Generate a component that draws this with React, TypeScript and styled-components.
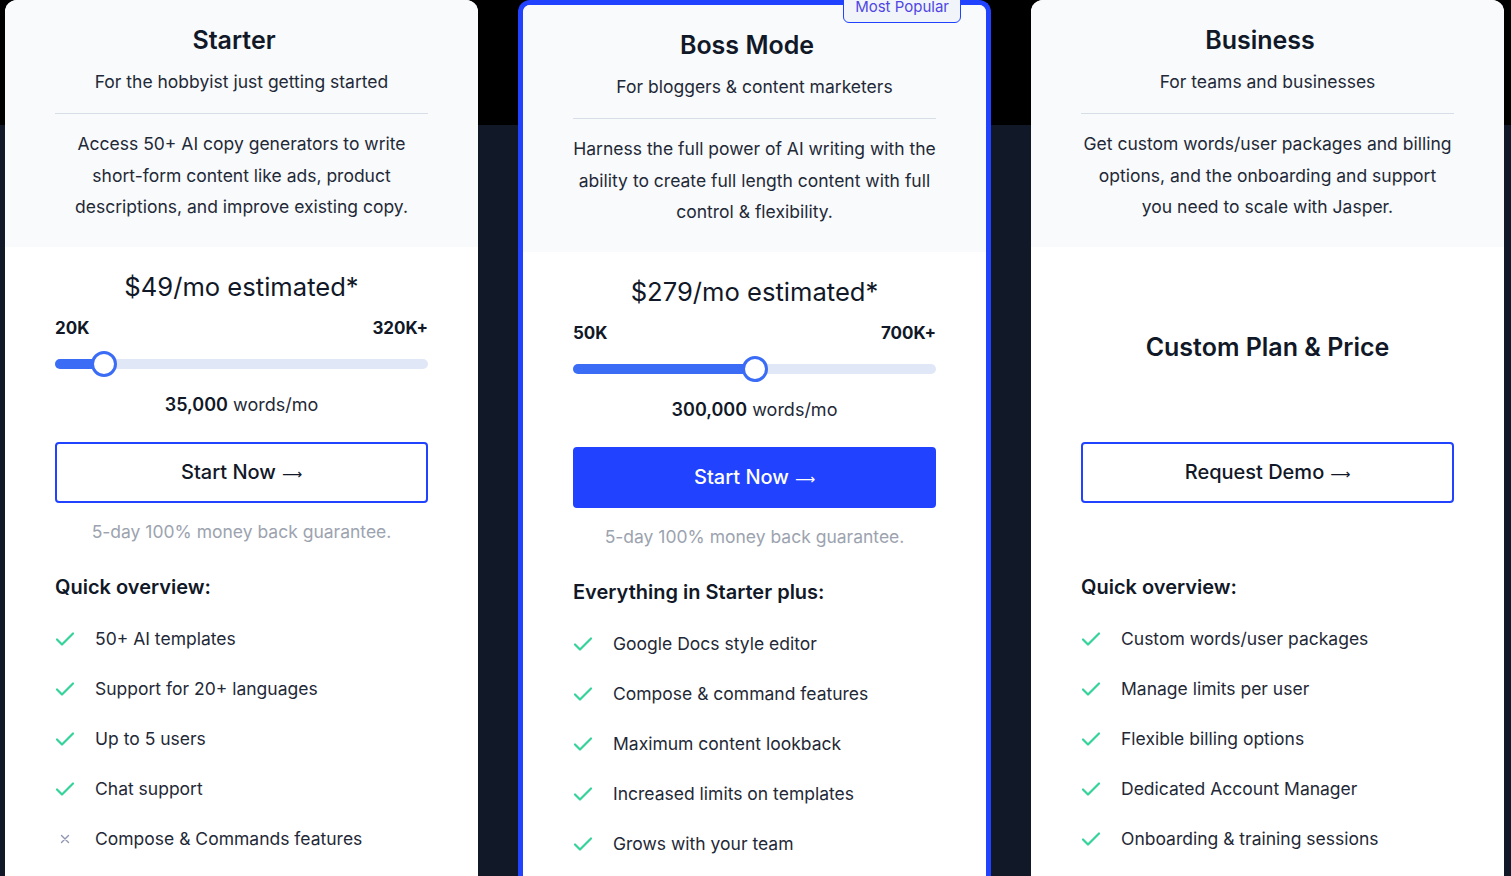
import React from "react";
import styled, { createGlobalStyle } from "styled-components";

const GlobalStyle = createGlobalStyle`
  * { box-sizing: border-box; }
  html, body { margin: 0; padding: 0; }
  body {
    font-family: Inter, "Noto Sans", "Liberation Sans", sans-serif;
    color: #111827;
    background: #111827;
  }
`;

const Page = styled.div`
  min-height: 876px;
  background: linear-gradient(to bottom, #000 0, #000 125px, #111827 125px, #111827 100%);
  padding: 0 7px 0 5px;
`;

const Grid = styled.div`
  display: grid;
  grid-template-columns: repeat(3, minmax(0, 1fr));
  gap: 40px;
  align-items: start;
`;

const Card = styled.div<{ $featured?: boolean }>`
  position: relative;
  background: #fff;
  border-radius: 12px 12px 0 0;
  border: ${(p) => (p.$featured ? "5px solid #2142ff" : "none")};
  border-bottom: none;
  padding-bottom: 60px;
`;

const Top = styled.div<{ $featured?: boolean }>`
  display: flex;
  flex-direction: column;
  align-items: center;
  background: #f8fafc;
  border-radius: ${(p) => (p.$featured ? "7px 7px 0 0" : "12px 12px 0 0")};
  padding: 24px 50px 24px;
  text-align: center;
`;

const Title = styled.h2`
  margin: 0;
  padding-right: 15px;
  font-size: 25px;
  line-height: 32px;
  font-weight: 600;
  color: #111827;
`;

const Subtitle = styled.p`
  margin: 12px 0 0;
  font-size: 17.5px;
  line-height: 28px;
  color: #1f2937;
`;

const Divider = styled.hr`
  align-self: stretch;
  border: none;
  height: 1px;
  background: #d8dee8;
  margin: 17px 0 14px;
`;

const Desc = styled.p`
  width: 369px;
  flex: none;
  margin: 0;
  font-size: 17.5px;
  line-height: 31.5px;
  color: #1f2937;
`;

const Body = styled.div`
  padding: 0 50px;
`;

const PriceBlock = styled.div`
  height: 172px;
  padding-top: 22px;
`;

const Price = styled.div`
  text-align: center;
  font-size: 25.6px;
  line-height: 36px;
  color: #111827;
`;

const RangeLabels = styled.div`
  margin-top: 11px;
  display: flex;
  justify-content: space-between;
  font-size: 17px;
  line-height: 24px;
  font-weight: 700;
  color: #111827;
`;

const Slider = styled.div`
  position: relative;
  margin-top: 11px;
  height: 26px;
  display: flex;
  align-items: center;
`;

const Track = styled.div`
  position: relative;
  width: 100%;
  height: 10px;
  border-radius: 5px;
  background: #e0e8f8;
`;

const Fill = styled.div`
  position: absolute;
  left: 0;
  top: 0;
  bottom: 0;
  border-radius: 5px;
  background: #3b6cf6;
`;

const Thumb = styled.div`
  position: absolute;
  top: 50%;
  width: 26px;
  height: 26px;
  margin: -13px 0 0 -13px;
  border-radius: 50%;
  background: #fff;
  border: 3px solid #3b6cf6;
`;

const Words = styled.div`
  margin-top: 14px;
  text-align: center;
  font-size: 18px;
  line-height: 28px;
  color: #1f2937;
  b { font-weight: 600; color: #111827; }
`;

const CustomPlan = styled.div`
  height: 172px;
  padding-top: 82px;
  text-align: center;
  font-size: 25px;
  line-height: 36px;
  font-weight: 600;
  color: #111827;
`;

const Button = styled.button<{ $filled?: boolean }>`
  display: flex;
  align-items: center;
  justify-content: center;
  gap: 6px;
  width: 100%;
  height: 61px;
  margin-top: 23px;
  border-radius: 4px;
  border: 2px solid #2142ff;
  background: ${(p) => (p.$filled ? "#2142ff" : "#fff")};
  color: ${(p) => (p.$filled ? "#fff" : "#111827")};
  font-family: inherit;
  font-size: 20px;
  font-weight: 500;
  cursor: pointer;
`;

const Arrow = styled.span`
  font-family: "DejaVu Sans", sans-serif;
  font-weight: 400;
  font-size: 14px;
  line-height: 1;
  position: relative;
  top: 2px;
`;

const Guarantee = styled.div<{ $hidden?: boolean }>`
  margin-top: 15px;
  text-align: center;
  font-size: 17.5px;
  line-height: 28px;
  color: #9ca3af;
  visibility: ${(p) => (p.$hidden ? "hidden" : "visible")};
`;

const ListHeading = styled.h3`
  margin: 27px 0 0;
  font-size: 20px;
  line-height: 28px;
  font-weight: 600;
  color: #111827;
`;

const List = styled.ul`
  list-style: none;
  margin: 13px 0 0;
  padding: 0;
`;

const Item = styled.li`
  display: flex;
  align-items: center;
  gap: 20px;
  height: 50px;
  font-size: 17.5px;
  color: #1f2937;
`;

const IconBox = styled.span`
  display: flex;
  align-items: center;
  justify-content: center;
  width: 20px;
  flex: none;
`;

const Badge = styled.div`
  position: absolute;
  top: -14px;
  right: 25px;
  height: 32px;
  padding: 0 11px;
  display: flex;
  align-items: center;
  border: 1px solid #2142ff;
  border-radius: 6px;
  background: #f1f5f9;
  color: #4f46e5;
  font-size: 15px;
  line-height: 20px;
`;

const Check = () => (
  <svg width="20" height="16" viewBox="0 0 20 16" fill="none">
    <path d="M2 8.5 L7 13.5 L18 2.5" stroke="#34d399" strokeWidth="2.2" strokeLinecap="round" strokeLinejoin="round" />
  </svg>
);

const Cross = () => (
  <svg width="10" height="10" viewBox="0 0 10 10" fill="none">
    <path d="M1.5 1.5 L8.5 8.5 M8.5 1.5 L1.5 8.5" stroke="#8e96b4" strokeWidth="1.4" strokeLinecap="round" />
  </svg>
);

type Feature = { text: string; ok: boolean };

type Plan = {
  name: string;
  subtitle: string;
  desc: string;
  featured?: boolean;
  price?: string;
  min?: string;
  max?: string;
  pct?: number;
  words?: string;
  cta: string;
  guarantee: boolean;
  heading: string;
  features: Feature[];
};

const plans: Plan[] = [
  {
    name: "Starter",
    subtitle: "For the hobbyist just getting started",
    desc: "Access 50+ AI copy generators to write short-form content like ads, product descriptions, and improve existing copy.",
    price: "$49/mo estimated*",
    min: "20K",
    max: "320K+",
    pct: 13.2,
    words: "35,000",
    cta: "Start Now",
    guarantee: true,
    heading: "Quick overview:",
    features: [
      { text: "50+ AI templates", ok: true },
      { text: "Support for 20+ languages", ok: true },
      { text: "Up to 5 users", ok: true },
      { text: "Chat support", ok: true },
      { text: "Compose & Commands features", ok: false },
    ],
  },
  {
    name: "Boss Mode",
    subtitle: "For bloggers & content marketers",
    desc: "Harness the full power of AI writing with the ability to create full length content with full control & flexibility.",
    featured: true,
    price: "$279/mo estimated*",
    min: "50K",
    max: "700K+",
    pct: 50.1,
    words: "300,000",
    cta: "Start Now",
    guarantee: true,
    heading: "Everything in Starter plus:",
    features: [
      { text: "Google Docs style editor", ok: true },
      { text: "Compose & command features", ok: true },
      { text: "Maximum content lookback", ok: true },
      { text: "Increased limits on templates", ok: true },
      { text: "Grows with your team", ok: true },
    ],
  },
  {
    name: "Business",
    subtitle: "For teams and businesses",
    desc: "Get custom words/user packages and billing options, and the onboarding and support you need to scale with Jasper.",
    cta: "Request Demo",
    guarantee: false,
    heading: "Quick overview:",
    features: [
      { text: "Custom words/user packages", ok: true },
      { text: "Manage limits per user", ok: true },
      { text: "Flexible billing options", ok: true },
      { text: "Dedicated Account Manager", ok: true },
      { text: "Onboarding & training sessions", ok: true },
    ],
  },
];

const PlanCard = ({ plan }: { plan: Plan }) => (
  <Card $featured={plan.featured}>
    {plan.featured && <Badge>Most Popular</Badge>}
    <Top $featured={plan.featured}>
      <Title>{plan.name}</Title>
      <Subtitle>{plan.subtitle}</Subtitle>
      <Divider />
      <Desc>{plan.desc}</Desc>
    </Top>
    <Body>
      {plan.price ? (
        <PriceBlock>
          <Price>{plan.price}</Price>
          <RangeLabels>
            <span>{plan.min}</span>
            <span>{plan.max}</span>
          </RangeLabels>
          <Slider>
            <Track>
              <Fill style={{ width: `${plan.pct}%` }} />
              <Thumb style={{ left: `${plan.pct}%` }} />
            </Track>
          </Slider>
          <Words>
            <b>{plan.words}</b> words/mo
          </Words>
        </PriceBlock>
      ) : (
        <CustomPlan>Custom Plan &amp; Price</CustomPlan>
      )}
      <Button $filled={plan.featured}>
        {plan.cta}
        <Arrow>⟶</Arrow>
      </Button>
      <Guarantee $hidden={!plan.guarantee}>5-day 100% money back guarantee.</Guarantee>
      <ListHeading>{plan.heading}</ListHeading>
      <List>
        {plan.features.map((f) => (
          <Item key={f.text}>
            <IconBox>{f.ok ? <Check /> : <Cross />}</IconBox>
            {f.text}
          </Item>
        ))}
      </List>
    </Body>
  </Card>
);

export default function App() {
  return (
    <>
      <GlobalStyle />
      <Page>
        <Grid>
          {plans.map((p) => (
            <PlanCard key={p.name} plan={p} />
          ))}
        </Grid>
      </Page>
    </>
  );
}
